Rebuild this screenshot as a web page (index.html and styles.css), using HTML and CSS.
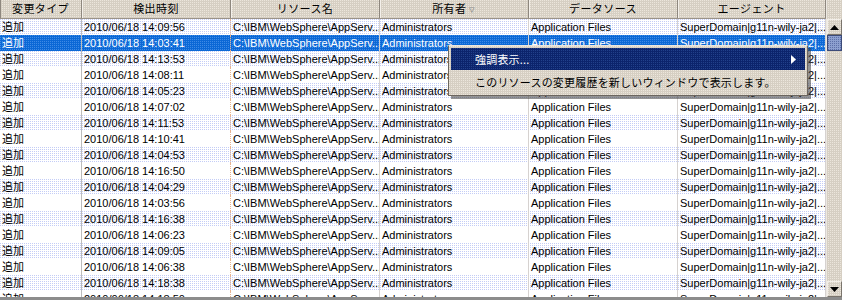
FILE: index.html
```html
<!DOCTYPE html>
<html lang="ja">
<head>
<meta charset="utf-8">
<title>変更履歴</title>
<link rel="stylesheet" href="styles.css">
</head>
<body>
<div class="window">
  <div class="table">
    <div class="head">
      <div class="hc">変更タイプ</div>
      <div class="hc">検出時刻</div>
      <div class="hc">リソース名</div>
      <div class="hc">所有者 <span class="sort">▿</span></div>
      <div class="hc">データソース</div>
      <div class="hc">エージェント</div>
    </div>
    <div class="rows">
      <div class="row odd"><div class="c c1">追加</div><div class="c c2">2010/06/18 14:09:56</div><div class="c">C:\IBM\WebSphere\AppServ...</div><div class="c">Administrators</div><div class="c">Application Files</div><div class="c">SuperDomain|g11n-wily-ja2|...</div></div>
      <div class="row sel"><div class="c c1">追加</div><div class="c c2">2010/06/18 14:03:41</div><div class="c">C:\IBM\WebSphere\AppServ...</div><div class="c">Administrators</div><div class="c">Application Files</div><div class="c">SuperDomain|g11n-wily-ja2|...</div></div>
      <div class="row odd"><div class="c c1">追加</div><div class="c c2">2010/06/18 14:13:53</div><div class="c">C:\IBM\WebSphere\AppServ...</div><div class="c">Administrators</div><div class="c">Application Files</div><div class="c">SuperDomain|g11n-wily-ja2|...</div></div>
      <div class="row"><div class="c c1">追加</div><div class="c c2">2010/06/18 14:08:11</div><div class="c">C:\IBM\WebSphere\AppServ...</div><div class="c">Administrators</div><div class="c">Application Files</div><div class="c">SuperDomain|g11n-wily-ja2|...</div></div>
      <div class="row odd"><div class="c c1">追加</div><div class="c c2">2010/06/18 14:05:23</div><div class="c">C:\IBM\WebSphere\AppServ...</div><div class="c">Administrators</div><div class="c">Application Files</div><div class="c">SuperDomain|g11n-wily-ja2|...</div></div>
      <div class="row"><div class="c c1">追加</div><div class="c c2">2010/06/18 14:07:02</div><div class="c">C:\IBM\WebSphere\AppServ...</div><div class="c">Administrators</div><div class="c">Application Files</div><div class="c">SuperDomain|g11n-wily-ja2|...</div></div>
      <div class="row odd"><div class="c c1">追加</div><div class="c c2">2010/06/18 14:11:53</div><div class="c">C:\IBM\WebSphere\AppServ...</div><div class="c">Administrators</div><div class="c">Application Files</div><div class="c">SuperDomain|g11n-wily-ja2|...</div></div>
      <div class="row"><div class="c c1">追加</div><div class="c c2">2010/06/18 14:10:41</div><div class="c">C:\IBM\WebSphere\AppServ...</div><div class="c">Administrators</div><div class="c">Application Files</div><div class="c">SuperDomain|g11n-wily-ja2|...</div></div>
      <div class="row odd"><div class="c c1">追加</div><div class="c c2">2010/06/18 14:04:53</div><div class="c">C:\IBM\WebSphere\AppServ...</div><div class="c">Administrators</div><div class="c">Application Files</div><div class="c">SuperDomain|g11n-wily-ja2|...</div></div>
      <div class="row"><div class="c c1">追加</div><div class="c c2">2010/06/18 14:16:50</div><div class="c">C:\IBM\WebSphere\AppServ...</div><div class="c">Administrators</div><div class="c">Application Files</div><div class="c">SuperDomain|g11n-wily-ja2|...</div></div>
      <div class="row odd"><div class="c c1">追加</div><div class="c c2">2010/06/18 14:04:29</div><div class="c">C:\IBM\WebSphere\AppServ...</div><div class="c">Administrators</div><div class="c">Application Files</div><div class="c">SuperDomain|g11n-wily-ja2|...</div></div>
      <div class="row"><div class="c c1">追加</div><div class="c c2">2010/06/18 14:03:56</div><div class="c">C:\IBM\WebSphere\AppServ...</div><div class="c">Administrators</div><div class="c">Application Files</div><div class="c">SuperDomain|g11n-wily-ja2|...</div></div>
      <div class="row odd"><div class="c c1">追加</div><div class="c c2">2010/06/18 14:16:38</div><div class="c">C:\IBM\WebSphere\AppServ...</div><div class="c">Administrators</div><div class="c">Application Files</div><div class="c">SuperDomain|g11n-wily-ja2|...</div></div>
      <div class="row"><div class="c c1">追加</div><div class="c c2">2010/06/18 14:06:23</div><div class="c">C:\IBM\WebSphere\AppServ...</div><div class="c">Administrators</div><div class="c">Application Files</div><div class="c">SuperDomain|g11n-wily-ja2|...</div></div>
      <div class="row odd"><div class="c c1">追加</div><div class="c c2">2010/06/18 14:09:05</div><div class="c">C:\IBM\WebSphere\AppServ...</div><div class="c">Administrators</div><div class="c">Application Files</div><div class="c">SuperDomain|g11n-wily-ja2|...</div></div>
      <div class="row"><div class="c c1">追加</div><div class="c c2">2010/06/18 14:06:38</div><div class="c">C:\IBM\WebSphere\AppServ...</div><div class="c">Administrators</div><div class="c">Application Files</div><div class="c">SuperDomain|g11n-wily-ja2|...</div></div>
      <div class="row odd"><div class="c c1">追加</div><div class="c c2">2010/06/18 14:18:38</div><div class="c">C:\IBM\WebSphere\AppServ...</div><div class="c">Administrators</div><div class="c">Application Files</div><div class="c">SuperDomain|g11n-wily-ja2|...</div></div>
      <div class="row"><div class="c c1">追加</div><div class="c c2">2010/06/18 14:18:50</div><div class="c">C:\IBM\WebSphere\AppServ...</div><div class="c">Administrators</div><div class="c">Application Files</div><div class="c">SuperDomain|g11n-wily-ja2|...</div></div>
    </div>
  </div>
  <div class="scroll">
    <div class="sc-head"></div>
    <div class="sc-btn"><svg width="9" height="5" viewBox="0 0 9 5"><polygon points="4.5,0 9,5 0,5" fill="#000"/></svg></div>
    <div class="sc-thumb"></div>
    <div class="sc-track"></div>
    <div class="sc-btn"><svg width="9" height="5" viewBox="0 0 9 5"><polygon points="0,0 9,0 4.5,5" fill="#000"/></svg></div>
  </div>
  <div class="menu">
    <div class="mi hi"><span>強調表示...</span><svg class="arrow" width="5" height="9" viewBox="0 0 5 9"><polygon points="0,0 5,4.5 0,9" fill="#fff"/></svg></div>
    <div class="mi"><span>このリソースの変更履歴を新しいウィンドウで表示します。</span></div>
  </div>
</div>
</body>
</html>
```

FILE: styles.css
```css
html, body {
  margin: 0;
  padding: 0;
  background: #ffffff;
}

.window {
  position: relative;
  width: 842px;
  height: 300px;
  display: flex;
  overflow: hidden;
  font-family: "Liberation Sans", "Noto Sans CJK JP", sans-serif;
  font-size: 11px;
  color: #000;
  box-sizing: border-box;
  border-bottom: 3px solid #8c8c8c;
}

.table {
  width: 826px;
  display: flex;
  flex-direction: column;
  overflow: hidden;
}

.head,
.row {
  display: grid;
  grid-template-columns: 82px 149px 149px 149px 149px 148px;
}

.head {
  height: 19px;
  flex: none;
  box-sizing: border-box;
  border-bottom: 1px solid #9a9288;
  background-color: #d6cfc3;
  background-image: conic-gradient(from 0deg at 1px 1px, transparent 0 75%, #ece6dc 0);
  background-size: 2px 2px;
}

.hc {
  display: flex;
  align-items: center;
  justify-content: center;
  box-sizing: border-box;
  border-right: 1px solid #8e877e;
  box-shadow: inset 1px 0 0 #f4f0ea;
  letter-spacing: 0.4px;
  white-space: nowrap;
  line-height: 18px;
}

.hc:first-child {
  box-shadow: inset 1px 0 0 #8e877e;
}

.sort {
  color: #8a8a8a;
  margin-left: 3px;
  font-size: 11px;
}

.rows {
  display: flex;
  flex-direction: column;
}

.row {
  height: 16px;
  flex: none;
  background: #ffffff;
}

.row.odd {
  background-color: #ffffff;
  background-image: conic-gradient(from 0deg at 1px 1px, transparent 0 75%, #c4cdf6 0);
  background-size: 2px 2px;
}

.row.sel {
  background-color: #0b68d6;
  background-image: conic-gradient(from 0deg at 1px 1px, transparent 0 75%, #3d8ae6 0);
  background-size: 2px 2px;
  color: #ffffff;
}

.c {
  box-sizing: border-box;
  padding-left: 2px;
  line-height: 16px;
  white-space: nowrap;
  overflow: hidden;
  border-right: 1px solid #d6d2d0;
}

.c.c1 {
  border-right-color: #bcbcbc;
}

.c.c2 {
  border-right: 1px dotted #e8b490;
}

.scroll {
  width: 16px;
  display: flex;
  flex-direction: column;
  background-color: #d6cfc3;
  background-image: conic-gradient(from 0deg at 1px 1px, transparent 0 75%, #ece6dc 0);
  background-size: 2px 2px;
  box-shadow: inset 1px 0 0 #ece8e2;
}

.sc-head {
  height: 19px;
  flex: none;
}

.sc-btn {
  height: 16px;
  flex: none;
  display: flex;
  align-items: center;
  justify-content: center;
  box-sizing: border-box;
  margin-left: 1px;
  border-top: 1px solid #f2eee8;
  border-left: 1px solid #f2eee8;
  border-right: 1px solid #7a746c;
  border-bottom: 1px solid #7a746c;
}

.sc-thumb {
  height: 16px;
  flex: none;
  margin-left: 1px;
  box-sizing: border-box;
  border: 1px solid #3c4a78;
  background-color: #8da0cf;
  background-image: conic-gradient(from 0deg at 1px 1px, transparent 0 50%, #5d70a8 0 75%, transparent 0);
  background-size: 2px 2px;
}

.sc-track {
  flex: 1;
}

.menu {
  position: absolute;
  left: 448px;
  top: 45px;
  width: 360px;
  box-sizing: border-box;
  padding: 2px;
  border-top: 1px solid #ece6dc;
  border-left: 1px solid #6c6660;
  border-right: 1px solid #6c6660;
  border-bottom: 1px solid #6c6660;
  background-color: #d6cfc3;
  background-image: conic-gradient(from 0deg at 1px 1px, transparent 0 75%, #ece6dc 0);
  background-size: 2px 2px;
  box-shadow: 3px 3px 0 rgba(60, 60, 60, 0.55);
  font-family: "Noto Sans CJK JP", "Liberation Sans", sans-serif;
  font-size: 11px;
}

.mi {
  height: 22px;
  display: flex;
  align-items: center;
  padding-left: 24px;
  padding-right: 9px;
  letter-spacing: 0.2px;
  white-space: nowrap;
}

.mi + .mi {
  margin-top: 1px;
}

.mi.hi {
  background-color: #0c246c;
  background-image: conic-gradient(from 0deg at 1px 1px, transparent 0 75%, #22408a 0);
  background-size: 2px 2px;
  color: #ffffff;
  justify-content: space-between;
}

.arrow {
  display: block;
}
```
